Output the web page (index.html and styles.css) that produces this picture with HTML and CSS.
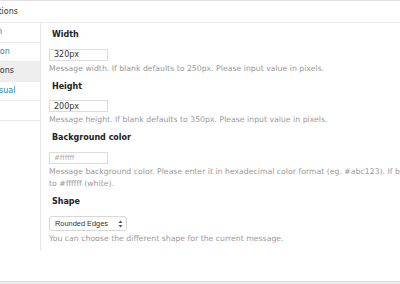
FILE: index.html
```html
<!DOCTYPE html>
<html>
<head>
<meta charset="utf-8">
<link rel="stylesheet" href="styles.css">
</head>
<body>
<div class="panel">
  <div class="panel-title">Options</div>
  <div class="panel-body">
    <ul class="sidebar">
      <li class="tab"><a href="#">Main</a></li>
      <li class="tab"><a href="#">Button</a></li>
      <li class="tab active"><a href="#">Options</a></li>
      <li class="tab"><a href="#">Unusual</a></li>
      <li class="tab blank"></li>
    </ul>
    <div class="content">
      <div class="field">
        <div class="label">Width</div>
        <input class="text-input" type="text" value="320px">
        <p class="desc">Message width. If blank defaults to 250px. Please input value in pixels.</p>
      </div>
      <div class="field">
        <div class="label">Height</div>
        <input class="text-input" type="text" value="200px">
        <p class="desc">Message height. If blank defaults to 350px. Please input value in pixels.</p>
      </div>
      <div class="field">
        <div class="label">Background color</div>
        <input class="text-input" type="text" placeholder="#ffffff">
        <p class="desc">Message background color. Please enter it in hexadecimal color format (eg. #abc123). If blank defaults to #ffffff (white).</p>
      </div>
      <div class="field">
        <div class="label">Shape</div>
        <span class="select-wrap">
          <select class="select"><option>Rounded Edges</option></select>
          <svg class="select-arrow" width="5" height="8" viewBox="0 0 5 8"><path d="M2.5 0.5 L4.5 3 H0.5 Z M2.5 7.5 L4.5 5 H0.5 Z" fill="#555"/></svg>
        </span>
        <p class="desc">You can choose the different shape for the current message.</p>
      </div>
    </div>
  </div>
</div>
</body>
</html>
```
FILE: styles.css
```css
html, body {
  margin: 0;
  padding: 0;
  overflow: hidden;
  background: #ececec;
}
body {
  font-family: "DejaVu Sans", Verdana, sans-serif;
  width: 400px;
  height: 284px;
}
.panel {
  margin-left: -30px;
  width: 500px;
  background: #fff;
  border-top: 1px solid #e2e2e2;
  border-bottom: 1px solid #dcdcdc;
}
.panel-title {
  height: 21px;
  line-height: 21px;
  padding-left: 17px;
  font-size: 8px;
  color: #333;
  border-bottom: 1px solid #ececec;
}
.panel-body {
  display: flex;
  align-items: flex-start;
  height: 258px;
}
.sidebar {
  list-style: none;
  margin: 0;
  padding: 0;
  width: 70px;
  flex: none;
}
.tab {
  height: 18.5px;
  line-height: 18.5px;
  border-bottom: 1px solid #ececec;
  padding-left: 13px;
  font-size: 8px;
}
.tab a {
  color: #1b84b8;
  text-decoration: none;
}
.tab.active {
  background: #eeeeee;
}
.tab.active a {
  color: #333;
}
.content {
  border-left: 1px solid #e6e6e6;
  padding: 7px 0 6px 8px;
  flex: 1;
}
.field {
  display: flex;
  flex-direction: column;
  align-items: flex-start;
}
.field + .field {
  margin-top: 7px;
}
.label {
  font-size: 8px;
  line-height: 10px;
  font-weight: bold;
  color: #222;
  padding-left: 3px;
}
.text-input {
  margin: 8.5px 0 0 0;
  box-sizing: border-box;
  width: 59px;
  height: 12px;
  border: 1px solid #dddddd;
  padding: 0 4px;
  font-family: "DejaVu Sans", Verdana, sans-serif;
  font-size: 8px;
  color: #333;
  background: #fff;
  outline: none;
}
.text-input::placeholder {
  color: #aaa;
  font-size: 7px;
}
.select-wrap {
  position: relative;
  display: inline-block;
  margin-top: 9.5px;
}
.select {
  display: block;
  appearance: none;
  -webkit-appearance: none;
  box-sizing: border-box;
  width: 78px;
  height: 15px;
  border: 1px solid #d8d8d8;
  border-radius: 3px;
  background: #fff;
  padding: 0 0 0 5px;
  font-family: "Liberation Sans", Arial, sans-serif;
  font-size: 7.4px;
  color: #333;
  line-height: 13px;
  outline: none;
}
.select-arrow {
  position: absolute;
  right: 4px;
  top: 3.5px;
}
.desc {
  margin: 2px 0 0 0;
  font-size: 7.75px;
  line-height: 12px;
  color: #9a9a9a;
  width: 410px;
}
```
